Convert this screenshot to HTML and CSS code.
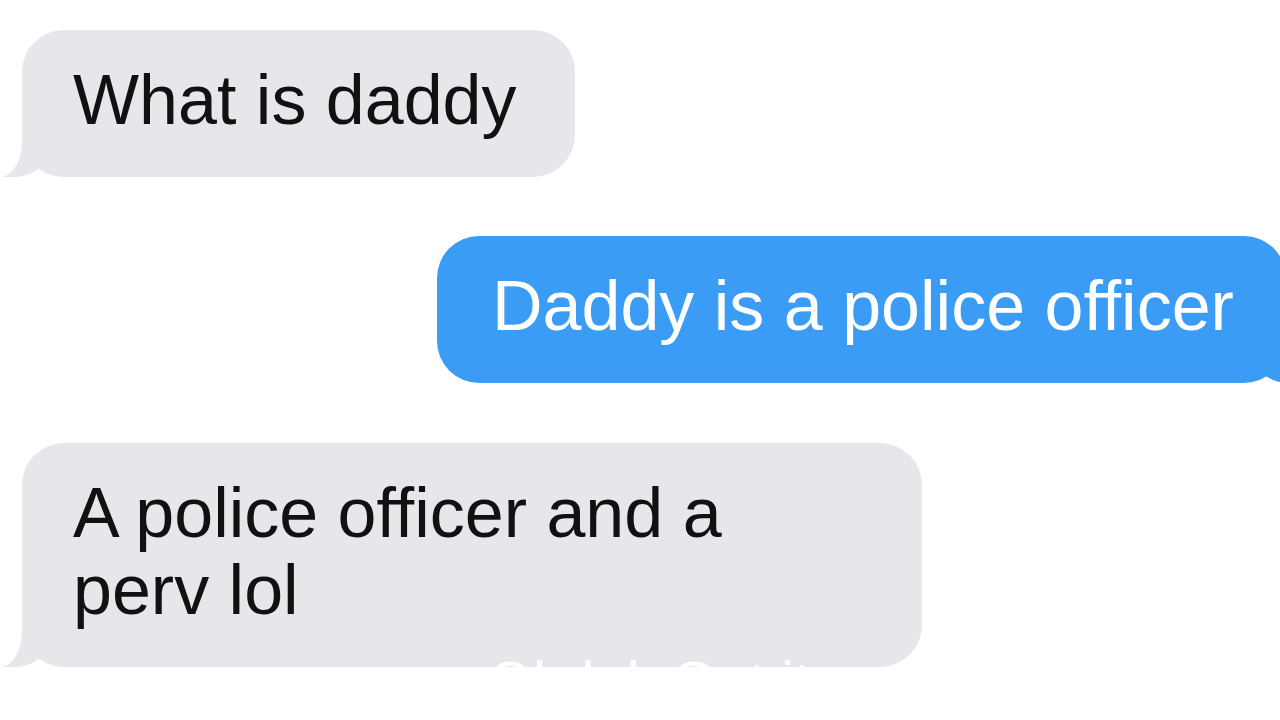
FILE: index.html
```html
<!DOCTYPE html>
<html lang="en">
<head>
    <meta charset="UTF-8">
    <meta name="viewport" content="width=device-width, initial-scale=1.0">
    <title>Messages</title>
    <link rel="stylesheet" href="styles.css">
</head>
<body>
    <div class="chat">
        <div class="bubble incoming">What is daddy</div>
        <div class="bubble outgoing">Daddy is a police officer</div>
        <div class="bubble incoming wide">A police officer and a perv lol
            <span class="caption">Oh lol. Got it</span>
        </div>
    </div>
</body>
</html>
```

FILE: styles.css
```css
html, body {
    margin: 0;
    padding: 0;
    height: 100%;
    overflow: hidden;
    background-color: #fff;
}
body {
    font-family: 'Liberation Sans', Arial, Helvetica, sans-serif;
    color: #111;
}
.chat {
    display: flex;
    flex-direction: column;
    align-items: flex-start;
    gap: 59px;
    padding: 30px 0 0 22px;
}
.bubble {
    position: relative;
    box-sizing: border-box;
    font-size: 70px;
    line-height: 77px;
    padding: 32px 58px 38px 51px;
    border-radius: 42px;
    white-space: normal;
}
.bubble.incoming {
    background-color: #e6e6eb;
    color: #111;
}
.bubble.outgoing {
    align-self: flex-end;
    margin-right: -6px;
    width: 849px;
    padding-left: 55px;
    padding-right: 20px;
    background-color: #3b9cf5;
    color: #fff;
}
.bubble.wide {
    width: 900px;
    margin-top: 1px;
    padding-right: 170px;
}
/* tails */
.bubble::before,
.bubble::after {
    content: "";
    position: absolute;
    bottom: 0;
    height: 46px;
}
.bubble.incoming::before {
    left: -20px;
    border-left: 48px solid #e6e6eb;
    border-bottom-right-radius: 36px 30px;
}
.bubble.incoming::after {
    left: -56px;
    width: 56px;
    background-color: #fff;
    border-bottom-right-radius: 22px 36px;
}
.bubble.outgoing::before {
    right: -15px;
    border-right: 48px solid #3b9cf5;
    border-bottom-left-radius: 36px 30px;
}
.bubble.outgoing::after {
    right: -56px;
    width: 56px;
    background-color: #fff;
    border-bottom-left-radius: 22px 36px;
}
.caption {
    position: absolute;
    left: 466px;
    top: 210px;
    font-size: 58px;
    line-height: 1;
    color: #fff;
    white-space: nowrap;
}
```
